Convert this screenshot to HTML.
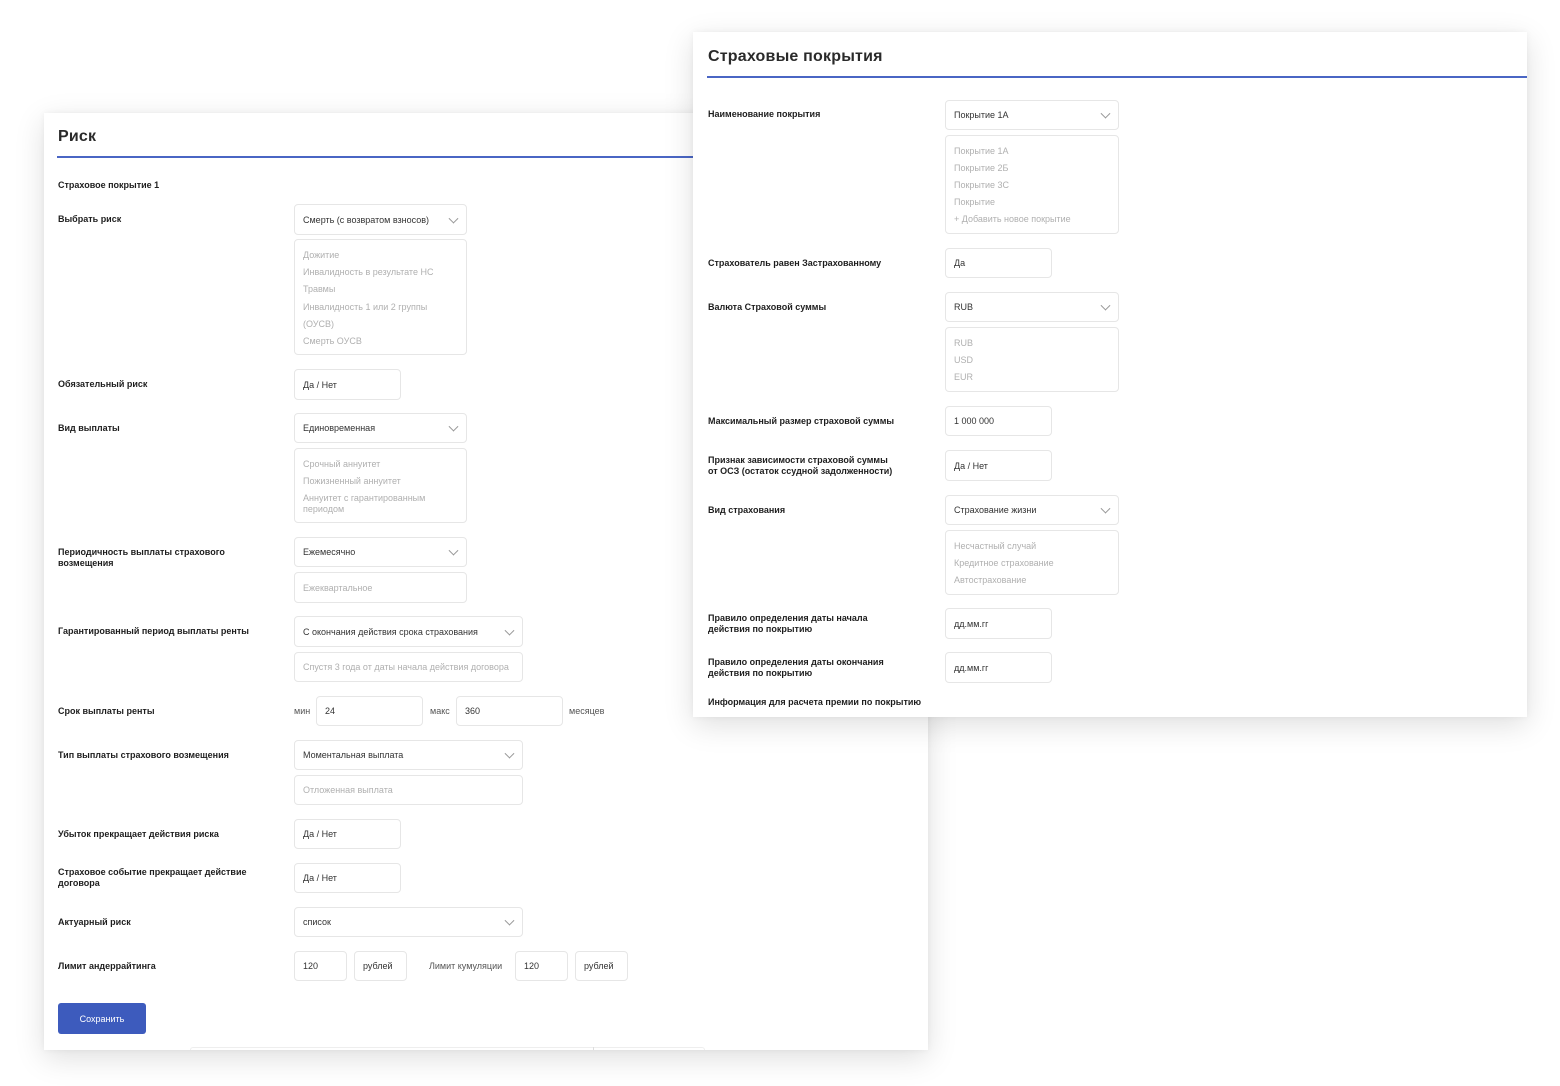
<!DOCTYPE html>
<html><head><meta charset="utf-8"><style>
*{margin:0;padding:0;box-sizing:border-box}
body{width:1560px;height:1086px;background:#fff;position:relative;overflow:hidden;font-family:"Liberation Sans","DejaVu Sans",sans-serif}
.panel{position:absolute;background:#fff;box-shadow:0 8px 28px rgba(0,0,0,.13),0 0 6px rgba(0,0,0,.05)}
.t{position:absolute;font-size:9px;line-height:11px;color:#222;white-space:nowrap}
.b{font-weight:bold;color:#1e1e1e}
.h{position:absolute;font-size:16px;font-weight:bold;color:#2a2a2a;letter-spacing:.2px}
.line{position:absolute;height:2px;background:#4a66c4}
.box{position:absolute;border:1px solid #e6e6e6;border-radius:4px;background:#fff;font-size:9px;color:#333;padding-left:8px;display:flex;align-items:center}
.list{position:absolute;border:1px solid #e6e6e6;border-radius:4px;background:#fff}
.list div{position:absolute;left:8px;font-size:9px;color:#b0b0b0;white-space:nowrap;line-height:11px}
.ph{color:#b0b0b0}
.chev{position:absolute;right:9px;top:50%;width:7px;height:7px;border-right:1px solid #999;border-bottom:1px solid #999;transform:translateY(-70%) rotate(45deg)}
.btn{position:absolute;background:#3d5bbd;color:#fff;border-radius:3px;font-size:9px;display:flex;align-items:center;justify-content:center}
</style></head><body>

<!-- LEFT PANEL -->
<div class="panel" style="left:44px;top:113px;width:884px;height:937px"></div>
<div class="h" style="left:58px;top:128px">Риск</div>
<div class="line" style="left:57px;top:156px;width:640px"></div>
<div class="t b" style="left:58px;top:180px">Страховое покрытие 1</div>

<div class="t b" style="left:58px;top:214px">Выбрать риск</div>
<div class="box" style="left:294px;top:204px;width:173px;height:31px">Смерть (с возвратом взносов)<span class="chev"></span></div>
<div class="list" style="left:294px;top:239px;width:173px;height:116px">
<div style="top:10px">Дожитие</div><div style="top:27px">Инвалидность в результате НС</div><div style="top:44px">Травмы</div><div style="top:62px">Инвалидность 1 или 2 группы</div><div style="top:79px">(ОУСВ)</div><div style="top:96px">Смерть ОУСВ</div></div>

<div class="t b" style="left:58px;top:379px">Обязательный риск</div>
<div class="box" style="left:294px;top:369px;width:107px;height:31px">Да / Нет</div>

<div class="t b" style="left:58px;top:423px">Вид выплаты</div>
<div class="box" style="left:294px;top:413px;width:173px;height:30px">Единовременная<span class="chev"></span></div>
<div class="list" style="left:294px;top:448px;width:173px;height:75px">
<div style="top:10px">Срочный аннуитет</div><div style="top:27px">Пожизненный аннуитет</div><div style="top:44px;line-height:11px">Аннуитет с гарантированным<br>периодом</div></div>

<div class="t b" style="left:58px;top:547px">Периодичность выплаты страхового<br>возмещения</div>
<div class="box" style="left:294px;top:537px;width:173px;height:30px">Ежемесячно<span class="chev"></span></div>
<div class="box ph" style="left:294px;top:572px;width:173px;height:31px">Ежеквартальное</div>

<div class="t b" style="left:58px;top:626px">Гарантированный период выплаты ренты</div>
<div class="box" style="left:294px;top:616px;width:229px;height:31px">С окончания действия срока страхования<span class="chev"></span></div>
<div class="box ph" style="left:294px;top:652px;width:229px;height:30px">Спустя 3 года от даты начала действия договора</div>

<div class="t b" style="left:58px;top:706px">Срок выплаты ренты</div>
<div class="t" style="left:294px;top:706px;color:#555">мин</div>
<div class="box" style="left:316px;top:696px;width:107px;height:30px">24</div>
<div class="t" style="left:430px;top:706px;color:#555">макс</div>
<div class="box" style="left:456px;top:696px;width:107px;height:30px">360</div>
<div class="t" style="left:569px;top:706px;color:#555">месяцев</div>

<div class="t b" style="left:58px;top:750px">Тип выплаты страхового возмещения</div>
<div class="box" style="left:294px;top:740px;width:229px;height:30px">Моментальная выплата<span class="chev"></span></div>
<div class="box ph" style="left:294px;top:775px;width:229px;height:30px">Отложенная выплата</div>

<div class="t b" style="left:58px;top:829px">Убыток прекращает действия риска</div>
<div class="box" style="left:294px;top:819px;width:107px;height:30px">Да / Нет</div>

<div class="t b" style="left:58px;top:867px">Страховое событие прекращает действие<br>договора</div>
<div class="box" style="left:294px;top:863px;width:107px;height:30px">Да / Нет</div>

<div class="t b" style="left:58px;top:917px">Актуарный риск</div>
<div class="box" style="left:294px;top:907px;width:229px;height:30px">список<span class="chev"></span></div>

<div class="t b" style="left:58px;top:961px">Лимит андеррайтинга</div>
<div class="box" style="left:294px;top:951px;width:53px;height:30px">120</div>
<div class="box" style="left:354px;top:951px;width:53px;height:30px">рублей</div>
<div class="t" style="left:429px;top:961px;color:#555">Лимит кумуляции</div>
<div class="box" style="left:515px;top:951px;width:53px;height:30px">120</div>
<div class="box" style="left:575px;top:951px;width:53px;height:30px">рублей</div>

<div class="btn" style="left:58px;top:1003px;width:88px;height:31px">Сохранить</div>
<div style="position:absolute;left:190px;top:1047px;width:515px;height:3px;border:1px solid #eee;border-bottom:none;border-radius:4px 4px 0 0"></div>
<div style="position:absolute;left:593px;top:1047px;width:1px;height:3px;background:#ddd"></div>

<!-- RIGHT PANEL -->
<div class="panel" style="left:693px;top:32px;width:834px;height:685px"></div>
<div class="h" style="left:708px;top:48px">Страховые покрытия</div>
<div class="line" style="left:707px;top:76px;width:820px"></div>

<div class="t b" style="left:708px;top:109px">Наименование покрытия</div>
<div class="box" style="left:945px;top:100px;width:174px;height:30px">Покрытие 1А<span class="chev"></span></div>
<div class="list" style="left:945px;top:135px;width:174px;height:99px">
<div style="top:10px">Покрытие 1А</div><div style="top:27px">Покрытие 2Б</div><div style="top:44px">Покрытие 3С</div><div style="top:61px">Покрытие</div><div style="top:78px">+ Добавить новое покрытие</div></div>

<div class="t b" style="left:708px;top:258px">Страхователь равен Застрахованному</div>
<div class="box" style="left:945px;top:248px;width:107px;height:30px">Да</div>

<div class="t b" style="left:708px;top:302px">Валюта Страховой суммы</div>
<div class="box" style="left:945px;top:292px;width:174px;height:30px">RUB<span class="chev"></span></div>
<div class="list" style="left:945px;top:327px;width:174px;height:65px">
<div style="top:10px">RUB</div><div style="top:27px">USD</div><div style="top:44px">EUR</div></div>

<div class="t b" style="left:708px;top:416px">Максимальный размер страховой суммы</div>
<div class="box" style="left:945px;top:406px;width:107px;height:30px">1 000 000</div>

<div class="t b" style="left:708px;top:455px">Признак зависимости страховой суммы<br>от ОСЗ (остаток ссудной задолженности)</div>
<div class="box" style="left:945px;top:450px;width:107px;height:31px">Да / Нет</div>

<div class="t b" style="left:708px;top:505px">Вид страхования</div>
<div class="box" style="left:945px;top:495px;width:174px;height:30px">Страхование жизни<span class="chev"></span></div>
<div class="list" style="left:945px;top:530px;width:174px;height:65px">
<div style="top:10px">Несчастный случай</div><div style="top:27px">Кредитное страхование</div><div style="top:44px">Автострахование</div></div>

<div class="t b" style="left:708px;top:613px">Правило определения даты начала<br>действия по покрытию</div>
<div class="box" style="left:945px;top:608px;width:107px;height:31px">дд.мм.гг</div>

<div class="t b" style="left:708px;top:657px">Правило определения даты окончания<br>действия по покрытию</div>
<div class="box" style="left:945px;top:652px;width:107px;height:31px">дд.мм.гг</div>

<div class="t b" style="left:708px;top:697px">Информация для расчета премии по покрытию</div>

</body></html>
